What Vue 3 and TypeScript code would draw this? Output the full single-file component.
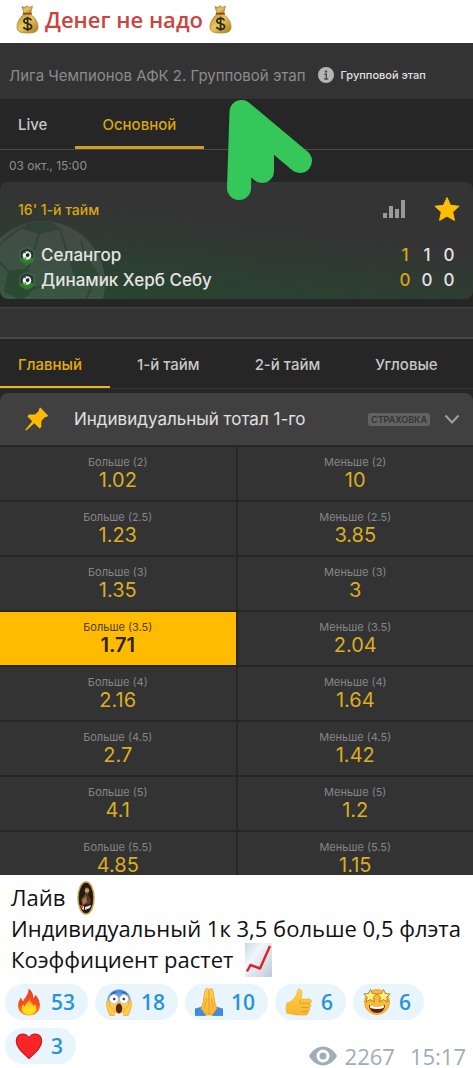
<script setup lang="ts">
import { ref } from 'vue'

interface Odd {
  id: string
  label: string
  value: string
}

interface Reaction {
  icon: string
  label: string
  count: number
}

const lines = ['2', '2.5', '3', '3.5', '4', '4.5', '5', '5.5']
const over = ['1.02', '1.23', '1.35', '1.71', '2.16', '2.7', '4.1', '4.85']
const under = ['10', '3.85', '3', '2.04', '1.64', '1.42', '1.2', '1.15']

const odds: Odd[] = lines.flatMap((line, i) => [
  { id: `o${line}`, label: `Больше (${line})`, value: over[i] },
  { id: `u${line}`, label: `Меньше (${line})`, value: under[i] },
])

const teams = [
  { name: 'Селангор', scores: [1, 1, 0] },
  { name: 'Динамик Херб Себу', scores: [0, 0, 0] },
]

const reactions: Reaction[] = [
  { icon: 'fire', label: 'Огонь', count: 53 },
  { icon: 'scream', label: 'Крик', count: 18 },
  { icon: 'pray', label: 'Спасибо', count: 10 },
  { icon: 'thumb', label: 'Нравится', count: 6 },
  { icon: 'star', label: 'Восторг', count: 6 },
  { icon: 'heart', label: 'Сердце', count: 3 },
]

const feeds = ['Live', 'Основной']
const feed = ref('Основной')
const markets = ['Главный', '1-й тайм', '2-й тайм', 'Угловые']
const market = ref('Главный')
const picked = ref('o3.5')
</script>

<template>
  <article class="post">
    <svg class="defs" width="0" height="0" aria-hidden="true">
      <defs>
        <linearGradient id="gold" x1="0" x2="1" y1="0" y2="1">
          <stop offset="0" stop-color="#b98a2c" />
          <stop offset=".45" stop-color="#e9c659" />
          <stop offset="1" stop-color="#a87a22" />
        </linearGradient>
        <linearGradient id="flame" x1="0" x2="0" y1="0" y2="1">
          <stop offset="0" stop-color="#f0401c" />
          <stop offset=".6" stop-color="#f4511e" />
          <stop offset="1" stop-color="#ff9b1a" />
        </linearGradient>
        <linearGradient id="flame-core" x1="0" x2="0" y1="0" y2="1">
          <stop offset="0" stop-color="#ffa21f" />
          <stop offset=".7" stop-color="#ffe51c" />
          <stop offset="1" stop-color="#ffd21a" />
        </linearGradient>
        <linearGradient id="scream-skin" x1="0" x2="0" y1="0" y2="1">
          <stop offset="0" stop-color="#3f86e0" />
          <stop offset=".38" stop-color="#7cabdc" />
          <stop offset=".6" stop-color="#f6cf5f" />
          <stop offset="1" stop-color="#ffc23d" />
        </linearGradient>
        <linearGradient id="skin" x1="0" x2="0" y1="0" y2="1">
          <stop offset="0" stop-color="#ffd24a" />
          <stop offset="1" stop-color="#f9b52c" />
        </linearGradient>
        <linearGradient id="paper" x1="0" x2="1" y1="0" y2="1">
          <stop offset="0" stop-color="#c9d9e2" />
          <stop offset=".35" stop-color="#f1f6f9" />
          <stop offset="1" stop-color="#bccbd5" />
        </linearGradient>
        <g id="money-bag">
          <path d="M6 1.5 8.500 2.500 11 .8 13 2.400 16.500 1.200 14.600 8.500H8z" fill="url(#gold)" stroke="#8c6a28" stroke-width=".6" />
          <path d="M8 9C3.500 13 1 17.500 1 22c0 4.500 3 6 10.500 6S22 26.500 22 22c0-4.500-2.500-9-7.500-13z" fill="url(#gold)" stroke="#a07a2b" stroke-width=".7" />
          <path d="M7.500 8.600h7.600" stroke="#8a4a20" stroke-width="1.800" stroke-linecap="round" />
          <path d="M15.500 15.300c-.8-1.400-2.200-1.900-3.900-1.900-2.200 0-3.700 1-3.700 2.700 0 3.800 7.700 1.500 7.700 5.300 0 1.800-1.700 2.800-4 2.800-1.900 0-3.400-.7-4.100-2.200M11.600 11.700v14.300" fill="none" stroke="#2c2a28" stroke-width="1.700" />
        </g>
      </defs>
    </svg>

    <h1 class="title">
      <svg class="bag" viewBox="0 0 23 29" aria-hidden="true"><use href="#money-bag" /></svg>
      <span>Денег не надо</span>
      <svg class="bag" viewBox="0 0 23 29" aria-hidden="true"><use href="#money-bag" /></svg>
    </h1>

    <section class="board">
      <header class="league">
        <span class="league-name">Лига Чемпионов АФК 2. Групповой этап</span>
        <svg class="info" viewBox="0 0 16 16" aria-hidden="true">
          <circle cx="8" cy="8" r="8" fill="#b4b4b4" />
          <circle cx="8" cy="4.500" r="1.200" fill="#4a4a4a" />
          <path d="M6.300 7.200H8.300V12M6.200 12h4" fill="none" stroke="#4a4a4a" stroke-width="1.400" />
        </svg>
        <span class="stage">Групповой этап</span>
      </header>

      <nav class="feeds">
        <button
          v-for="f in feeds"
          :key="f"
          type="button"
          class="feed"
          :class="{ active: feed === f }"
          @click="feed = f"
        >{{ f }}</button>
      </nav>

      <time class="date">03 окт., 15:00</time>

      <div class="match">
        <svg class="ball" viewBox="0 0 124 124" aria-hidden="true">
          <circle cx="62" cy="62" r="62" fill="#fff" fill-opacity=".09" />
          <g fill="#14351f" fill-opacity=".38">
            <path d="M39 7 58 13 79 8 72 2C60-1 48 1 39 7z" />
            <path d="M27 50 47 47 54 67 41 80 23 71z" />
            <path d="M87 34 104 34 118 53 110 67 94 58z" />
            <path d="M2 49 13 35 22 20 8 32z" />
          </g>
          <g fill="none" stroke="#14351f" stroke-opacity=".38" stroke-width="2">
            <path d="M58 13 47 47M79 8 87 34M54 67 94 58M39 7 22 20M13 35 27 50M104 34 100 20M110 67 100 90" />
          </g>
        </svg>
        <div class="match-head">
          <span class="clock">16' 1-й тайм</span>
          <button type="button" class="icon-button" aria-label="Статистика">
            <svg class="bars" viewBox="0 0 22 20" aria-hidden="true">
              <path d="M0 14h4v5H0zM6 7h4v12H6zM12 10h4v9h-4zM18 1h4v18h-4z" fill="#9a9a9a" />
            </svg>
          </button>
          <button type="button" class="icon-button" aria-label="Избранное">
            <svg class="fav" viewBox="0 0 24 24" aria-hidden="true">
              <path d="M12 1.500 15.200 8.600 23 9.400 17.200 14.600 18.800 22.300 12 18.400 5.200 22.300 6.800 14.600 1 9.400 8.800 8.600z" fill="#ffbd05" stroke="#ffbd05" stroke-linejoin="round" />
            </svg>
          </button>
        </div>
        <table class="teams">
          <tbody>
            <tr v-for="t in teams" :key="t.name">
              <th scope="row">
                <span class="team">
                  <svg class="badge" viewBox="0 0 16 18" aria-hidden="true">
                    <path d="M8 .7 15 4v8c0 3-4 4.500-7 5.500C5 16.500 1 15 1 12V4z" fill="#26372c" stroke="#5d7564" stroke-width=".8" />
                    <path d="M1.500 11h13v1.500C14.300 14.600 11 16 8 17c-3-1-6.300-2.400-6.500-4.500z" fill="#27851f" />
                    <circle cx="8" cy="8.500" r="4.300" fill="#eee" />
                    <path d="m7 7 2.500-1 1.200 2L9 10.200 7 9.500zM4.500 5.800 6.500 4.500l.3 1.800zM5 11l1.700-.4.900 1.700zM11.500 9.500l.6-2" fill="#222" />
                  </svg>
                  {{ t.name }}
                </span>
              </th>
              <td v-for="(s, i) in t.scores" :key="i">{{ s }}</td>
            </tr>
          </tbody>
        </table>
      </div>

      <div class="divider"></div>

      <nav class="markets">
        <button
          v-for="m in markets"
          :key="m"
          type="button"
          class="market"
          :class="{ active: market === m }"
          @click="market = m"
        >{{ m }}</button>
      </nav>

      <button type="button" class="group">
        <svg class="pin" viewBox="0 0 24 24" aria-hidden="true">
          <path d="M15.300.5 23.300 8.700 21 10.300 20 10 16.400 14 16.300 20 14.600 21.500 9.300 16.300 1.200 23.500.3 22.700 7.200 14.200 2.300 9.200 4 7.400 10 7.400 14 3.800 13.700 2.400z" fill="#ffb905" />
        </svg>
        <span class="group-name">Индивидуальный тотал 1-го</span>
        <span class="tag">СТРАХОВКА</span>
        <svg class="chevron" viewBox="0 0 16 10" aria-hidden="true">
          <path d="m1.500 1.500 6.500 7 6.500-7" fill="none" stroke="#a0a0a0" stroke-width="2" />
        </svg>
      </button>

      <div class="odds">
        <button
          v-for="o in odds"
          :key="o.id"
          type="button"
          class="odd"
          :class="{ picked: picked === o.id }"
          @click="picked = o.id"
        >
          <span class="odd-label">{{ o.label }}</span>
          <span class="odd-value">{{ o.value }}</span>
        </button>
      </div>

      <svg class="pointer" viewBox="0 0 90 104" aria-hidden="true">
        <path d="M15.500 13 74 62M15.500 13 13 89M36 50V72" fill="none" stroke="#35c759" stroke-width="24" stroke-linecap="round" />
        <path d="M14 13 50 46 46 54 46 72 25 79 13 88z" fill="#35c759" />
      </svg>
    </section>

    <div class="caption">
      <p>
        Лайв
        <svg class="medal" viewBox="0 0 18 34" aria-hidden="true">
          <ellipse cx="9" cy="17" rx="8" ry="16" fill="#211b15" stroke="#c8a24c" stroke-width="1.500" />
          <path d="M8 7c3-2 5 1 4 4l-1 3 3 5-1 4-8 1-1-6 4-5z" fill="#5b3a25" />
          <circle cx="10" cy="9.500" r="2.200" fill="#c99b73" />
          <path d="m5 19 4-4 1 6-4 3z" fill="#a47550" />
          <path d="M4 25h3v4l-2-1zM8 26l6-2-1 3-5 2z" fill="#e8e1db" />
          <path d="M3 24h3v3H4z" fill="#d93a28" />
        </svg>
      </p>
      <p>Индивидуальный 1к 3,5 больше 0,5 флэта</p>
      <p>
        Коэффициент растет
        <svg class="chart" viewBox="0 0 27 34" aria-hidden="true">
          <path d="M0 0h27v34H0z" fill="url(#paper)" />
          <path d="M2 28.500 5.500 22 15 25.500 25 3" fill="none" stroke="#e01f2b" stroke-width="2.400" stroke-linejoin="round" />
        </svg>
      </p>
    </div>

    <footer class="footer">
      <button v-for="r in reactions" :key="r.icon" type="button" class="reaction" :aria-label="`${r.label}: ${r.count}`">
        <svg class="emoji" viewBox="0 0 28 28" aria-hidden="true">
          <g v-if="r.icon === 'fire'">
            <path d="M13.500.5c3.500 2.500 5 5.500 4.700 9.500 1.200-.6 1.800-1.700 2-3.300 3.500 3.500 5.300 8 4.600 12.300C24 24.500 19.500 27.500 14 27.500S3.800 24.500 3.200 19c-.4-3.600.6-6.800 3-9.800.2 2 .8 3.200 2 4C9.500 9.500 14 6.500 13.500.5z" fill="url(#flame)" />
            <path d="M15 10.500c0 4.500 3 4.500 3.300 7.500.9-.5 1.300-1.200 1.500-2.200 1.900 2.700 2 5.700.4 8-1.300 2-3.700 3.200-6.200 3.200s-5-1.200-6.200-3.200c-1.400-2.300-1.200-5 .3-7.800.4 1.400 1 2.100 2 2.500-.2-3.500 3.900-4 4.900-8z" fill="url(#flame-core)" />
          </g>
          <g v-else-if="r.icon === 'scream'">
            <circle cx="14" cy="13.500" r="12" fill="url(#scream-skin)" />
            <path d="M6 6.500q3-2.500 5.500-2.300M22 6.500q-3-2.500-5.500-2.300" fill="none" stroke="#2e63a7" stroke-width="1.200" />
            <circle cx="9" cy="11" r="4.500" fill="#fff" stroke="#a9b7bd" stroke-width=".6" />
            <circle cx="19" cy="11" r="4.500" fill="#fff" stroke="#a9b7bd" stroke-width=".6" />
            <circle cx="9.200" cy="11" r="1.300" fill="#4a3a32" />
            <circle cx="18.800" cy="11" r="1.300" fill="#4a3a32" />
            <ellipse cx="14" cy="20.500" rx="3.200" ry="5" fill="#5c2410" />
            <path d="M1.700 13c1-1.300 2.300-.6 2.500.8l.6 4 4.200 4.700.3 5H5c-2.500-4.500-4-9.500-3.300-14.500zM26.300 13c-1-1.300-2.300-.6-2.500.8l-.6 4-4.200 4.700-.3 5H23c2.500-4.500 4-9.500 3.300-14.500z" fill="#ffcc45" stroke="#eaa02c" stroke-width=".7" />
          </g>
          <g v-else-if="r.icon === 'pray'">
            <path d="m0 21 7-2 5 4-1.500 4.500H0zM28 21l-7-2-5 4 1.500 4.500H28z" fill="#3d8ee0" stroke="#2b72c3" stroke-width=".6" />
            <path d="M13.800 1.500c-1.500-1.800-3.600-1-3.800 1L8 15l-2 5.500 5 6.500H13.800zM14.200 1.500c1.500-1.800 3.600-1 3.800 1L20 15l2 5.500-5 6.500H14.200z" fill="url(#skin)" stroke="#e59b26" stroke-width=".7" />
            <path d="M11.500 10.500 9.700 20M16.500 10.500 18.300 20" stroke="#e59b26" stroke-width=".8" />
          </g>
          <g v-else-if="r.icon === 'thumb'">
            <path d="M2 15c4-1 8-4.500 10-9.500.5-3 .6-4.500 2-4.500 2.500 0 3.500 3 2.500 6.500L15.800 11H24c3 0 3 4 .7 4.500 2 1 1.500 4-.7 4.200 1.400 1.300.8 3.600-1.200 3.800 1 1.500 0 3.500-2 3.500h-8C9 27 7 25.500 2 25.500.8 22 .8 18 2 15z" fill="url(#skin)" stroke="#eda52e" stroke-width=".6" />
            <path d="M16.500 15.300h8.200M16.500 19.500H24M16 23.500h6.800M16.500 11.500c-2 1.500-2.500 4-1.500 5" fill="none" stroke="#e29428" stroke-width=".9" />
          </g>
          <g v-else-if="r.icon === 'star'">
            <circle cx="14" cy="14" r="12.500" fill="#ffb832" stroke="#ee9527" stroke-width=".8" />
            <path d="M6 17q8 3 16 0c-.2 5-3.500 8-8 8s-7.800-3-8-8z" fill="#5c2710" />
            <path d="M7 17.300q7 2.400 14 0l-.3 2.700q-6.700 2-13.400 0z" fill="#fff" />
            <path d="m7.500 1.500 1.800 4 4.400.5-3.200 3.200.9 4.600-4-2.200-4.200 2.200 1-4.600L.8 6l4.600-.5zM20.500 1.500l1.800 4 4.900.5-3.500 3.200.9 4.600-4.100-2.200-4 2.200.9-4.600L14.300 6l4.400-.5z" fill="#ffed83" stroke="#8f7723" stroke-width=".8" stroke-linejoin="round" />
          </g>
          <g v-else>
            <path d="M14 26.500C7.500 20.500 1.300 15.500 1.300 9 1.300 4.700 4.200 2 7.700 2c2.800 0 5 1.500 6.300 4 1.300-2.500 3.500-4 6.300-4 3.500 0 6.400 2.700 6.400 7 0 6.500-6.200 11.500-12.700 17.500z" fill="#fb2526" stroke="#c5182a" stroke-width="1.200" />
          </g>
        </svg>
        <span>{{ r.count }}</span>
      </button>
      <div class="meta">
        <svg class="eye" viewBox="0 0 28 20" aria-hidden="true">
          <path d="M0 10C3.500 4 8.500.5 14 .5S24.500 4 28 10c-3.500 6-8.500 9.500-14 9.500S3.500 16 0 10z" fill="#a0adb7" />
          <circle cx="14" cy="10" r="6.500" fill="#fff" />
          <circle cx="14" cy="10" r="3.500" fill="#a0adb7" />
        </svg>
        <span>2267</span>
        <time>15:17</time>
      </div>
    </footer>
  </article>
</template>

<style>
body {
  margin: 0;
  background: #fff;
}
</style>

<style scoped>
.post {
  font-family: 'Open Sans', 'Noto Sans', sans-serif;
  color: #111;
  background: #fff;
}
.defs {
  position: absolute;
}
svg {
  flex: none;
}
button {
  margin: 0;
  padding: 0;
  border: 0;
  background: none;
  color: inherit;
  font: inherit;
  cursor: pointer;
}
.title {
  display: flex;
  align-items: center;
  gap: 6px;
  height: 43px;
  margin: 0;
  padding: 0 16px 5px;
  box-sizing: border-box;
  color: #cb4440;
  font-size: 22px;
  font-weight: 600;
  line-height: 30px;
  white-space: nowrap;
}
.bag {
  width: 23px;
  height: 29px;
}
.board {
  position: relative;
  background: #262626;
  color: #c8c8c8;
  font-family: Inter, 'Noto Sans', sans-serif;
}
.league {
  display: flex;
  align-items: center;
  height: 56px;
  padding: 8px 9px 0;
  box-sizing: border-box;
  background: #333;
  white-space: nowrap;
}
.league-name {
  color: #8c8c8c;
  font-size: 15px;
}
.info {
  width: 16px;
  height: 16px;
  margin: 0 7px 0 12px;
}
.stage {
  color: #e0e0e0;
  font-size: 11px;
  font-weight: 500;
}
.feeds {
  display: flex;
  height: 51px;
  box-sizing: border-box;
  border-bottom: 1px solid #4a4a4a;
}
.feed {
  padding: 4px 28px 0 27px;
  border-bottom: 3px solid transparent;
  font-size: 15px;
  font-weight: 500;
}
.feed:first-child {
  padding-left: 18px;
}
.feed.active {
  color: #d9a516;
  border-color: #cf9d22;
}
.date {
  display: block;
  padding: 0 9px;
  color: #8e8e8e;
  font-size: 12px;
  line-height: 32px;
}
.match {
  position: relative;
  height: 117px;
  padding: 14px 13px 0 18px;
  box-sizing: border-box;
  border-radius: 8px;
  background: linear-gradient(187deg, #343434 38%, #24492f 105%);
  overflow: hidden;
}
.ball {
  position: absolute;
  left: -19px;
  top: 39px;
  width: 124px;
  height: 124px;
}
.match-head {
  position: relative;
  display: flex;
  align-items: center;
  height: 26px;
}
.clock {
  flex: 1;
  color: #dba612;
  font-size: 14px;
  font-weight: 500;
}
.icon-button {
  display: flex;
  margin-left: 29px;
}
.bars {
  width: 22px;
  height: 20px;
}
.fav {
  width: 26px;
  height: 26px;
}
.teams {
  position: relative;
  width: 100%;
  margin-top: 21px;
  border-collapse: collapse;
  color: #e4e4e4;
  font-size: 17px;
  line-height: 25px;
}
.teams th {
  padding: 0;
  font-weight: 500;
  text-align: left;
}
.teams td {
  width: 22px;
  padding: 0;
  font-weight: 500;
  text-align: center;
}
.teams td:nth-child(2) {
  color: #dba612;
}
.team {
  display: flex;
  align-items: center;
  gap: 5px;
}
.badge {
  width: 18px;
  height: 18px;
}
.divider {
  height: 32px;
  margin-top: 8px;
  box-sizing: border-box;
  border-top: 1px solid #444;
  border-bottom: 2px solid #484848;
  background: #333;
}
.markets {
  display: flex;
  height: 50px;
  box-sizing: border-box;
  border-bottom: 1px solid #393939;
}
.market {
  padding: 3px 28px 0 27px;
  border-bottom: 2px solid transparent;
  font-size: 15px;
  font-weight: 500;
  white-space: nowrap;
}
.market:first-child {
  padding-left: 18px;
}
.market.active {
  color: #e2ab12;
  border-color: #eeb41c;
}
.group {
  display: flex;
  align-items: center;
  width: 100%;
  height: 52px;
  margin: 4px 0 2px;
  padding: 0 13px 0 25px;
  border-radius: 8px 8px 0 0;
  background: #404040;
  text-align: left;
}
.pin {
  width: 24px;
  height: 24px;
}
.group-name {
  flex: 1;
  margin-left: 25px;
  color: #e0e0e0;
  font-size: 17px;
  white-space: nowrap;
}
.tag {
  padding: 0 3px;
  border-radius: 3px;
  background: #626262;
  color: #333;
  font-size: 9px;
  font-weight: 600;
  line-height: 13px;
}
.chevron {
  width: 16px;
  height: 10px;
  margin-left: 14px;
}
.odds {
  display: grid;
  grid-template-columns: 1fr 1fr;
  gap: 2px;
}
.odd {
  display: flex;
  flex-direction: column;
  align-items: center;
  min-height: 53px;
  padding-top: 8px;
  box-sizing: border-box;
  background: #333;
}
.odd:nth-last-child(-n + 2) {
  min-height: 43px;
}
.odd-label {
  color: #868686;
  font-size: 11px;
  line-height: 15px;
}
.odd-value {
  color: #dcae22;
  font-size: 20px;
  line-height: 20px;
}
.odd.picked {
  background: #ffbb00;
}
.picked .odd-label {
  color: #4c3c0c;
}
.picked .odd-value {
  color: #2a220c;
  font-weight: 600;
}
.pointer {
  position: absolute;
  left: 226px;
  top: 56px;
  width: 90px;
  height: 104px;
}
.caption {
  padding: 7px 9px 0 11px;
  font-size: 22px;
  line-height: 31px;
  white-space: nowrap;
}
.caption p {
  display: flex;
  align-items: center;
  height: 31px;
  margin: 0;
}
.medal {
  width: 18px;
  height: 34px;
  margin-left: 12px;
}
.chart {
  width: 27px;
  height: 34px;
  margin-left: 12px;
}
.footer {
  display: flex;
  flex-wrap: wrap;
  align-items: flex-start;
  gap: 8px 7px;
  padding: 9px 7px 0 5px;
}
.reaction {
  display: flex;
  align-items: center;
  gap: 8px;
  height: 36px;
  padding: 0 13px 0 10px;
  border-radius: 18px;
  background: #e8f5fd;
  color: #2b93d5;
  font-size: 21px;
  font-weight: 600;
  line-height: 36px;
}
.emoji {
  width: 28px;
  height: 28px;
}
.meta {
  display: flex;
  align-items: center;
  gap: 8px;
  height: 24px;
  margin: 16px 0 0 auto;
  color: #a0adb7;
  font-size: 22px;
  line-height: 24px;
}
.meta time {
  margin-left: 7px;
}
.eye {
  width: 28px;
  height: 20px;
}
</style>
